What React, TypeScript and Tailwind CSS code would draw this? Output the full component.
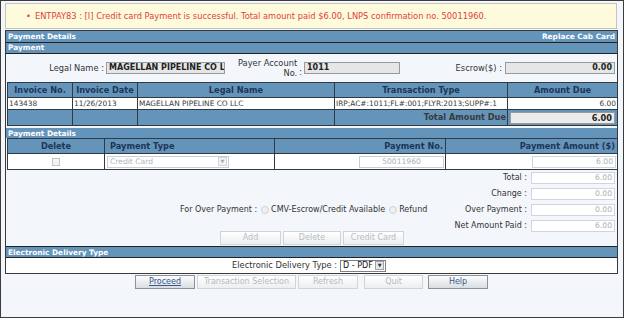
import React from 'react';

const bar = 'bg-[#6594bb] text-white font-bold text-[7.4px] flex items-center justify-between px-[2px]';
const th = 'border border-[#2f3a45] text-[#1c3656] font-bold text-[8.2px] h-[15px] px-[2px]';
const td = 'border border-[#2f3a45] text-[#3a3a3a] text-[7.4px] h-[12px] px-[1px]';

function Btn({ label, on, w, u }: { label: string; on?: boolean; w: string; u?: boolean }) {
    return (
        <div
            className={`${w} h-[14px] flex items-center justify-center text-[8px] ${
                on
                    ? 'border border-[#8c9198] bg-linear-to-b from-[#fdfdfd] to-[#d9dde2] text-[#36588e]'
                    : 'border border-[#cfd4d9] bg-linear-to-b from-white to-[#eceef0] text-[#b6bbc0]'
            } ${u ? 'underline' : ''}`}
        >
            {label}
        </div>
    );
}

function Amount({ value }: { value: string }) {
    return (
        <div className="w-[84px] h-[12px] border border-[#cdd6de] bg-white text-right text-[7.6px] text-[#a9aeb3] pr-[2px] leading-[10px]">
            {value}
        </div>
    );
}

export default function App() {
    return (
        <div className="w-[624px] h-[318px] border border-[#3c3c3c] bg-[#f3f7fb] pl-[4px] pt-[2px] font-['DejaVu_Sans',sans-serif] text-[8.3px] text-[#333] overflow-hidden">
            {/* message */}
            <div className="w-[612px] h-[26px] border border-[#c4c4c4] bg-[#fdfbdc] flex items-center pl-[20px] text-[#e2403a] text-[8.3px]">
                <span className="mr-[4px]">•</span>
                ENTPAY83 : [I] Credit card Payment is successful. Total amount paid $6.00, LNPS confirmation no. 50011960.
            </div>

            {/* main panel */}
            <div className="w-[613px] mt-[1px] border border-[#3a3a3a] bg-[#f3f7fb]">
                <div className={`${bar} h-[12px] border-b border-[#222]`}>
                    <span>Payment Details</span>
                    <span>Replace Cab Card</span>
                </div>
                <div className={`${bar} h-[11px] border-b border-[#222]`}>
                    <span>Payment</span>
                </div>

                {/* legal name row */}
                <div className="h-[28px] flex items-center">
                    <div className="w-[100px] text-right pr-[2px]">Legal Name :</div>
                    <div className="w-[119px] h-[12px] border border-[#9a9a9a] bg-[#e6e6e6] font-bold text-[8px] text-[#222] leading-[10px] pl-[2px] overflow-hidden whitespace-nowrap">
                        MAGELLAN PIPELINE CO LLC
                    </div>
                    <div className="w-[79px] flex items-center justify-end pr-[2px]">
                        <div className="text-right leading-[10px]">
                            Payer Account
                            <br />
                            No.
                        </div>
                        <span className="ml-[2px] mt-[8px]">:</span>
                    </div>
                    <div className="w-[96px] h-[12px] border border-[#9a9a9a] bg-[#e6e6e6] font-bold text-[8px] text-[#222] leading-[10px] pl-[2px]">1011</div>
                    <div className="flex-1 text-right pr-[3px]">Escrow($) :</div>
                    <div className="w-[110px] h-[12px] border border-[#9a9a9a] bg-[#e6e6e6] font-bold text-[8px] text-[#222] leading-[10px] text-right pr-[2px] mr-[2px]">
                        0.00
                    </div>
                </div>

                {/* invoice table */}
                <table className="ml-[1px] w-[610px] border-collapse table-fixed">
                    <thead>
                        <tr className="bg-[#6594bb]">
                            <th className={`${th} w-[65px]`}>Invoice No.</th>
                            <th className={`${th} w-[65px]`}>Invoice Date</th>
                            <th className={`${th} w-[197px]`}>Legal Name</th>
                            <th className={`${th} w-[173px]`}>Transaction Type</th>
                            <th className={`${th} w-[110px]`}>Amount Due</th>
                        </tr>
                    </thead>
                    <tbody>
                        <tr className="bg-white">
                            <td className={td}>143438</td>
                            <td className={td}>11/26/2013</td>
                            <td className={td}>MAGELLAN PIPELINE CO LLC</td>
                            <td className={`${td} whitespace-nowrap overflow-hidden`}>IRP;AC#:1011;FL#:001;FLYR:2013;SUPP#:1</td>
                            <td className={`${td} text-right`}>6.00</td>
                        </tr>
                        <tr className="bg-[#6594bb]">
                            <td className={`${td} h-[16px]`}></td>
                            <td className={td}></td>
                            <td className={td}></td>
                            <td className={`${td} text-right font-bold text-[#1c3656] text-[8.2px]`}>Total Amount Due</td>
                            <td className={`${td} px-[2px]`}>
                                <div className="h-[12px] border border-[#9a9a9a] bg-[#ebebeb] text-right font-bold text-[#222] text-[8.2px] leading-[10px] pr-[2px]">
                                    6.00
                                </div>
                            </td>
                        </tr>
                    </tbody>
                </table>

                {/* payment details */}
                <div className={`${bar} h-[10px] mt-[2px]`}>
                    <span>Payment Details</span>
                </div>
                <table className="ml-[1px] w-[610px] border-collapse table-fixed">
                    <thead>
                        <tr className="bg-[#6594bb]">
                            <th className={`${th} w-[97px]`}>Delete</th>
                            <th className={`${th} w-[170px] text-left pl-[5px]`}>Payment Type</th>
                            <th className={`${th} w-[171px] text-right`}>Payment No.</th>
                            <th className={`${th} w-[172px] text-right`}>Payment Amount ($)</th>
                        </tr>
                    </thead>
                    <tbody>
                        <tr className="bg-white">
                            <td className={`${td} h-[16px] text-center`}>
                                <div className="inline-block w-[8px] h-[8px] border border-[#c2c6ca] bg-[#f4f4f4] align-middle" />
                            </td>
                            <td className={td}>
                                <div className="w-[122px] h-[12px] ml-[1px] border border-[#c8ced4] bg-white flex items-center justify-between text-[#b0b4b8] text-[7.6px] pl-[2px]">
                                    <span>Credit Card</span>
                                    <span className="w-[9px] h-[9px] border border-[#d0d4d8] bg-[#f4f4f4] mr-[1px] flex items-center justify-center text-[5px] text-[#aaa]">▼</span>
                                </div>
                            </td>
                            <td className={td}>
                                <div className="w-[85px] h-[12px] ml-auto border border-[#c8ced4] bg-white text-center text-[#a9aeb3] text-[7.6px] leading-[10px]">50011960</div>
                            </td>
                            <td className={td}>
                                <div className="ml-auto w-[84px]">
                                    <Amount value="6.00" />
                                </div>
                            </td>
                        </tr>
                    </tbody>
                </table>

                {/* totals */}
                <div className="text-[8px]">
                    {[
                        ['Total :', '6.00', false],
                        ['Change :', '0.00', false],
                        ['Over Payment :', '0.00', true],
                        ['Net Amount Paid :', '6.00', false],
                    ].map(([label, value, over]) => (
                        <div key={label as string} className="h-[16px] flex items-center">
                            <div className="flex-1 pl-[174px] flex items-center whitespace-nowrap">
                                {over && (
                                    <>
                                        <span>For Over Payment :</span>
                                        <span className="inline-block w-[8px] h-[8px] rounded-full border border-[#cdd2d7] bg-[#eef0f2] ml-[4px] mr-[2px]" />
                                        <span>CMV-Escrow/Credit Available</span>
                                        <span className="inline-block w-[8px] h-[8px] rounded-full border border-[#cdd2d7] bg-[#eef0f2] ml-[4px] mr-[2px]" />
                                        <span>Refund</span>
                                    </>
                                )}
                            </div>
                            <div className="text-right pr-[4px]">{label as string}</div>
                            <div className="mr-[2px]">
                                <Amount value={value as string} />
                            </div>
                        </div>
                    ))}
                    <div className="flex justify-center gap-[2px] mt-[-3px] ml-[1px]">
                        <Btn label="Add" w="w-[61px]" />
                        <Btn label="Delete" w="w-[58px]" />
                        <Btn label="Credit Card" w="w-[61px]" />
                    </div>
                </div>

                {/* electronic delivery */}
                <div className={`${bar} h-[12px] border-y border-[#222] mt-[1px]`}>
                    <span>Electronic Delivery Type</span>
                </div>
                <div className="h-[15px] bg-white flex items-center pl-[226px]">
                    <span>Electronic Delivery Type :</span>
                    <div className="w-[46px] h-[12px] ml-[3px] border border-[#7d8186] bg-white flex items-center justify-between pl-[2px] text-[#111] text-[8px]">
                        <span>D - PDF</span>
                        <span className="w-[9px] h-[9px] border border-[#9ea3a8] bg-[#e6e8ea] mr-[1px] flex items-center justify-center text-[5px] text-[#333]">▼</span>
                    </div>
                </div>
            </div>

            {/* bottom buttons */}
            <div className="flex justify-center w-[613px] mt-[1px] gap-[2px]">
                <Btn label="Proceed" on u w="w-[60px]" />
                <Btn label="Transaction Selection" w="w-[99px]" />
                <Btn label="Refresh" w="w-[60px]" />
                <div className="w-[2px]" />
                <Btn label="Quit" w="w-[59px]" />
                <div className="w-[1px]" />
                <Btn label="Help" on w="w-[60px]" />
            </div>
        </div>
    );
}
